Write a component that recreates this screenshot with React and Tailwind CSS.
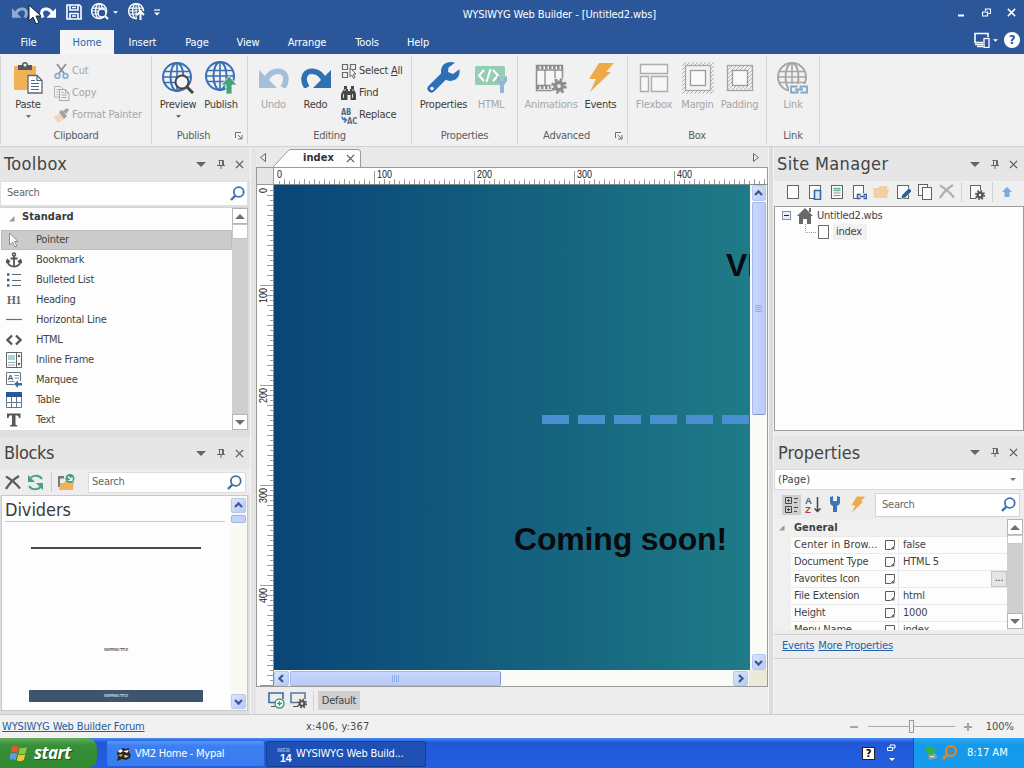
import React from "react";

/* ---------- icons ---------- */

function Svg({ w = 16, h = 16, vb, className = "", children }) {
  return (
    <svg width={w} height={h} viewBox={vb || `0 0 ${w} ${h}`} fill="none" className={"block shrink-0 " + className}>
      {children}
    </svg>
  );
}

function GlobeLines({ c, sw = 2 }) {
  return (
    <g stroke={c} strokeWidth={sw}>
      <circle cx="15" cy="15" r="14" />
      <ellipse cx="15" cy="15" rx="6.500" ry="14" />
      <path d="M2.500 9.500h25M2.500 20.500h25M15 1v28M1 15h28" strokeWidth={sw * 0.8} />
    </g>
  );
}

const UndoShape = ({ c, w = 30, h = 20, flip, className }) => (
  <Svg w={w} h={h} vb="0 0 30 20" className={className}>
    <g transform={flip ? "translate(30 0) scale(-1 1)" : undefined}>
      <path d="M0 2v18h18z" fill={c} />
      <path d="M7 12C11 2 23 1 26 7c2 4 1 8-2 12.500" stroke={c} strokeWidth="5.600" />
    </g>
  </Svg>
);

const PasteIcon = () => (
  <Svg w={30} h={32}>
    <rect x="1" y="4" width="22" height="24" rx="1" fill="#efb254" />
    <path d="M5 3h4c0-4 6-4 6 0h4v5H5z" fill="#58585a" />
    <circle cx="12" cy="3" r="1.500" fill="#f1f1f1" />
    <path d="M15 13.500h9l5 5v12.500H15z" fill="#fff" stroke="#5c6670" strokeWidth="1.300" />
    <path d="M24 13.500v5h5M18 18.500h4M18 21.500h8M18 24.500h8M18 27.500h8" stroke="#4c6780" strokeWidth="1.200" />
  </Svg>
);
const CutIcon = () => (
  <Svg>
    <path d="M3 1l7.500 10M12 1L4.500 11" stroke="#8b8c90" strokeWidth="1.700" />
    <circle cx="3.500" cy="13" r="2.300" stroke="#8fabd2" strokeWidth="1.800" />
    <circle cx="11.500" cy="13" r="2.300" stroke="#8fabd2" strokeWidth="1.800" />
  </Svg>
);
const CopyIcon = () => (
  <Svg>
    <path d="M5 12H.5V1.500h6L9 4M2.500 4.500h3M2.500 7h2M2.500 9.500h2" stroke="#b0b3b5" />
    <path d="M5.500 4.500h6l3.500 3.500v7.500H5.500zM11.500 4.500V8H15M7.500 7.500h2M7.500 10h5M7.500 12.500h5" stroke="#a3aaae" />
  </Svg>
);
const PainterIcon = () => (
  <Svg>
    <path d="M0 10l6-4 4 6-6 4z" fill="#f2d5bc" />
    <path d="M5 5l3-2 5 6-3 3zM9 4l4-3 2 2-3 4z" fill="#a4a1a1" />
  </Svg>
);
const PreviewIcon = () => (
  <Svg w={32} h={32}>
    <GlobeLines c="#386fb5" sw={2} />
    <circle cx="20" cy="20" r="6.500" fill="#f4f6f8" stroke="#454545" strokeWidth="2" />
    <path d="M25 25l6 6" stroke="#454545" strokeWidth="3" />
  </Svg>
);
const PublishIcon = () => (
  <Svg w={32} h={33}>
    <GlobeLines c="#386fb5" sw={2} />
    <path d="M24 15l-8 9h5v9h6v-9h5z" fill="#43a47c" stroke="#f1f1f1" strokeWidth="0.800" />
  </Svg>
);
const SelectAllIcon = () => (
  <Svg>
    <path d="M1.500 1.500h5v5h-5zM9.500 1.500h5v5h-5zM1.500 9.500h5v5h-5z" stroke="#6b6b6b" strokeWidth="1.200" />
    <path d="M9 5v9l2-2 1.500 3.500 1.500-1L12.500 11H15z" fill="#f4f4f4" stroke="#6b6b6b" />
  </Svg>
);
const FindIcon = () => (
  <Svg>
    <path d="M3 1h3v3h1V6h2V4h1V1h3v3l2 5v6H9.500v-5h-3v5H0V9l3-5z" fill="#474747" />
    <path d="M2.500 9v4M11.500 9v4M4 4v2M12 4v2" stroke="#d6d6d6" />
  </Svg>
);
const ReplaceIcon = () => (
  <Svg w={17} h={17}>
    <text x="0" y="7.500" fontSize="9" fontWeight="bold" fill="#4c6a88" fontFamily="DejaVu Sans Condensed" textLength="10" lengthAdjust="spacingAndGlyphs">AB</text>
    <text x="6" y="16.500" fontSize="9" fontWeight="bold" fill="#5c6b7a" fontFamily="DejaVu Sans Condensed" textLength="10" lengthAdjust="spacingAndGlyphs">AC</text>
    <path d="M1 9.500c0 3 2 3.500 4 3.500M3 10.500l2.500 2.500L3 15.500" stroke="#3d74ba" strokeWidth="1.400" />
  </Svg>
);
const WrenchBig = () => (
  <Svg w={34} h={32}>
    <path d="M4.500 26.500L17 14" stroke="#2e70b8" strokeWidth="8" strokeLinecap="round" />
    <path d="M28 .8c-8-2.500-14.500 2-14 9.500.5 7 8 10.500 14 7.500 3.800-2 5-6 4.500-10.500L26 12l-5-2 .5-4.500z" fill="#2e70b8" />
    <circle cx="5" cy="26.500" r="1.800" fill="#f1f1f1" />
  </Svg>
);
const HtmlBig = () => (
  <Svg w={32} h={32}>
    <rect x="0" y="4" width="30" height="19" rx="1.500" fill="#93ceb3" />
    <path d="M9 8l-5 5.500L9 19M18 8l5 5.500-5 5.500M15.500 7l-4 13" stroke="#fff" strokeWidth="2" />
    <path d="M27 21v10" stroke="#96b4d4" strokeWidth="4" />
    <path d="M22 14v5c1 4 9 4 10 0v-5l-3 1v4h-4v-4z" fill="#96b4d4" />
  </Svg>
);
const Gear = ({ cx, cy, r, c }) => (
  <g>
    <circle cx={cx} cy={cy} r={r * 0.85} stroke={c} strokeWidth={r * 0.4} strokeDasharray={`${r * 0.3338} ${r * 0.3338}`} />
    <circle cx={cx} cy={cy} r={r * 0.5} stroke={c} strokeWidth={r * 0.5} />
  </g>
);
const FilmIcon = () => (
  <Svg w={32} h={32}>
    <rect x="1.500" y="3.500" width="26" height="25" fill="#f7f7f7" stroke="#8d8d8d" strokeWidth="1.500" />
    <path d="M2 5.500h25M2 25.500h15" stroke="#8d8d8d" strokeWidth="3" strokeDasharray="2.500 1.500" />
    <path d="M1 8h27M1 23.500h16M10 8v15M20 8v8" stroke="#8d8d8d" strokeWidth="1.300" />
    <circle cx="24" cy="24" r="8.500" fill="#f1f1f1" />
    <Gear cx={24} cy={24} r={7.5} c="#8d8d8d" />
  </Svg>
);
const BoltBig = ({ w = 26, h = 31 }) => (
  <Svg w={w} h={h} vb="0 0 26 31">
    <path d="M11 1h15l-8 9h5L2 30l6-13H1z" fill="#eea94a" />
  </Svg>
);
const FlexIcon = () => (
  <Svg w={30} h={30}>
    <path d="M1.500 1.500h27v9h-27zM1.500 13.500h8v15h-8zM12.500 13.500h16v15h-16z" fill="#f7f7f7" stroke="#adadad" strokeWidth="1.400" />
  </Svg>
);
const Hatch = ({ id }) => (
  <pattern id={id} width="4" height="4" patternUnits="userSpaceOnUse">
    <path d="M-1 5L5 -1M-1 1L1 -1M3 5L5 3" stroke="#aaa" strokeWidth="0.900" />
  </pattern>
);
const MarginIcon = () => (
  <Svg w={32} h={32}>
    <defs><Hatch id="hm" /></defs>
    <rect x="0" y="0" width="32" height="32" fill="url(#hm)" />
    <rect x="3.500" y="3.500" width="25" height="25" fill="#f2f2f2" stroke="#aaa" strokeWidth="1.300" />
    <rect x="8.500" y="8.500" width="15" height="15" fill="#f9f9f9" stroke="#9b9b9b" strokeWidth="1.300" />
  </Svg>
);
const PaddingIcon = () => (
  <Svg w={28} h={28}>
    <defs><Hatch id="hp" /></defs>
    <rect x="1.500" y="1.500" width="25" height="25" fill="url(#hp)" stroke="#a5a5a5" strokeWidth="1.300" />
    <rect x="6.500" y="6.500" width="15" height="15" fill="#f9f9f9" stroke="#9b9b9b" strokeWidth="1.300" />
  </Svg>
);
const LinkBig = () => (
  <Svg w={32} h={32}>
    <GlobeLines c="#a6a6a6" sw={2} />
    <path d="M12 22h20v10H12z" fill="#f1f1f1" />
    <path d="M20.500 24.500h-6.500v6h6.500v-2M18 27.500h8M23.500 26.500v-2h6.500v6h-6.500" stroke="#7ea9cd" strokeWidth="1.800" />
  </Svg>
);
const Launcher = () => (
  <Svg w={8} h={8}>
    <path d="M.5 6V.5H6M3 3l4 4M7 3v4H3" stroke="#6e6e6e" />
  </Svg>
);
const Down = ({ w = 5, c = "#555", className = "" }) => (
  <Svg w={w} h={Math.ceil(w / 2)} vb="0 0 10 5" className={className}><path d="M0 0h10L5 5z" fill={c} /></Svg>
);
const Up = ({ w = 10, c = "#6f6f6f" }) => (
  <Svg w={w} h={w / 2} vb="0 0 10 5"><path d="M0 5h10L5 0z" fill={c} /></Svg>
);
const SearchIcon = ({ c = "#3d72b4" }) => (
  <Svg w={15} h={15}>
    <circle cx="8.800" cy="6" r="4.900" stroke={c} strokeWidth="1.800" />
    <path d="M5.500 9.500L1 14" stroke={c} strokeWidth="2.400" />
  </Svg>
);
const CloseX = ({ s = 9, c = "#5a5a5a", sw = 1.4 }) => (
  <Svg w={s} h={s} vb="0 0 10 10"><path d="M1 1l8 8M9 1L1 9" stroke={c} strokeWidth={sw} /></Svg>
);
const DeleteX = ({ c }) => (
  <Svg w={16} h={15}>
    <path d="M1 1.500c5 3 10 7 14 12" stroke={c} strokeWidth="2.200" />
    <path d="M14 1C9 4 4 9 1 14" stroke={c} strokeWidth="2.400" />
  </Svg>
);
const PinIcon = () => (
  <Svg w={8} h={9}><path d="M1.500.5h5M2.500.5v5M5.500.5v5M6.500.5v5M0 5.500h8M4 6v3" stroke="#666" /></Svg>
);

const PageShape = ({ x = 2.5, y = 1.5, w = 11, h = 13 }) => (
  <rect x={x} y={y} width={w} height={h} fill="#fcfcfc" stroke="#5d6266" />
);

/* ---------- ribbon ---------- */

function BigButton({ w, icon, label, off, arrow }) {
  return (
    <div className={"flex flex-col items-center " + w}>
      <div className="flex h-[37px] items-center justify-center">{icon}</div>
      <span className={"mt-px whitespace-nowrap leading-4 " + (off ? "text-[#a6a6a6]" : "text-[#3d3d3d]")}>{label}</span>
      {arrow && <Down className="mt-[2px]" />}
    </div>
  );
}
function SmallButton({ icon, children, off }) {
  return (
    <div className={"flex h-[22px] items-center whitespace-nowrap pt-[2px] " + (off ? "text-[#a6a6a6]" : "text-[#3d3d3d]")}>
      <span className="w-[18px]">{icon}</span>
      {children}
    </div>
  );
}
function Group({ w, label, launcher, children }) {
  return (
    <div className={"flex shrink-0 flex-col pt-[5px] " + w}>
      <div className="flex h-[69px]">{children}</div>
      <div className="flex h-4 items-center text-[#5c5c5c]">
        <span className="flex-1 text-center">{label}</span>
        {launcher && <span className="mr-1 w-[8px]"><Launcher /></span>}
      </div>
    </div>
  );
}
const Sep = () => <div className="mt-0.5 h-[88px] w-px shrink-0 bg-[#d5d5d5]" />;

function Ribbon() {
  return (
    <div className="flex h-[93px] shrink-0 border-b border-[#d0d0d0] bg-[#f1f1f1]">
      <Sep />
      <Group w="w-[150px]" label="Clipboard">
        <BigButton w="ml-[7px] w-10" icon={<PasteIcon />} label="Paste" arrow />
        <div className="ml-[6px] tracking-[-0.2px]">
          <SmallButton off icon={<CutIcon />}>Cut</SmallButton>
          <SmallButton off icon={<CopyIcon />}>Copy</SmallButton>
          <SmallButton off icon={<PainterIcon />}>Format Painter</SmallButton>
        </div>
      </Group>
      <Sep />
      <Group w="w-[95px]" label="Publish" launcher>
        <BigButton w="ml-1 w-11" icon={<PreviewIcon />} label="Preview" arrow />
        <BigButton w="w-[42px]" icon={<PublishIcon />} label="Publish" />
      </Group>
      <Sep />
      <Group w="w-[163px]" label="Editing">
        <BigButton w="ml-[5px] w-[41px]" icon={<UndoShape c="#a3bfda" />} label="Undo" off />
        <BigButton w="w-[43px]" icon={<UndoShape c="#2e70b3" flip />} label="Redo" />
        <div className="ml-1">
          <SmallButton icon={<SelectAllIcon />}>Select&nbsp;<u>A</u>ll</SmallButton>
          <SmallButton icon={<FindIcon />}>Find</SmallButton>
          <SmallButton icon={<ReplaceIcon />}>Replace</SmallButton>
        </div>
      </Group>
      <Sep />
      <Group w="w-[105px]" label="Properties">
        <BigButton w="ml-[5px] w-[53px]" icon={<WrenchBig />} label="Properties" />
        <BigButton w="w-[42px]" icon={<HtmlBig />} label="HTML" off />
      </Group>
      <Sep />
      <Group w="w-[109px]" label="Advanced" launcher>
        <BigButton w="ml-[5px] w-14" icon={<FilmIcon />} label="Animations" off />
        <BigButton w="w-[43px]" icon={<BoltBig />} label="Events" />
      </Group>
      <Sep />
      <Group w="w-[138px]" label="Box">
        <BigButton w="ml-1 w-11" icon={<FlexIcon />} label="Flexbox" off />
        <BigButton w="w-[43px]" icon={<MarginIcon />} label="Margin" off />
        <BigButton w="w-[41px]" icon={<PaddingIcon />} label="Padding" off />
      </Group>
      <Sep />
      <Group w="w-[52px]" label="Link">
        <BigButton w="ml-[5px] w-[42px]" icon={<LinkBig />} label="Link" off />
      </Group>
      <Sep />
    </div>
  );
}

/* ---------- title bar ---------- */

function TitleBar() {
  return (
    <div className="flex h-[30px] items-center pl-3 text-white">
      <div className="relative flex w-[48px] shrink-0 items-center gap-3 pb-1.5">
        <UndoShape c="#8fa9d0" w={16} h={11} />
        <UndoShape c="#fff" w={16} h={11} flip />
        <Svg w={13} h={21} className="absolute left-[16px] top-[-3px]">
          <path d="M1 1v16l4-4 3 7 3-1.500-3-6.500h5z" fill="#fff" stroke="#111" strokeWidth="0.900" />
        </Svg>
      </div>
      <div className="ml-[6px] flex items-center pb-1.5">
        <Svg w={16} h={16}>
          <path d="M1 1h12.500l1.500 1.500V15H1zM4 1v5h8V1M4 15V9.500h8V15M6 12h4M6 3.500h4" stroke="#fff" strokeWidth="1.600" />
        </Svg>
        <Svg w={18} h={18} className="ml-[9px]">
          <g transform="scale(.54)"><GlobeLines c="#fff" sw={2.4} /></g>
          <circle cx="11" cy="10" r="4" fill="#2b579a" stroke="#fff" strokeWidth="1.500" />
          <path d="M14 13l3 3" stroke="#fff" strokeWidth="2" />
        </Svg>
        <Down c="#fff" className="ml-1" />
        <Svg w={17} h={18} className="ml-[10px]">
          <g transform="scale(.54)"><GlobeLines c="#fff" sw={2.4} /></g>
          <path d="M9 8h8v9H9z" fill="#2b579a" />
          <path d="M12.500 17V9M9 12l3.500-3.500L16 12" stroke="#fff" strokeWidth="2" />
        </Svg>
        <Svg w={6} h={7} className="ml-[9px]"><path d="M0 1h6" stroke="#fff" strokeWidth="1.200" /><path d="M0 3.500h6L3 6.500z" fill="#fff" /></Svg>
      </div>
      <div className="flex flex-1 justify-end pr-[301px]"><span className="whitespace-nowrap tracking-[-0.1px]">WYSIWYG Web Builder - [Untitled2.wbs]</span></div>
      <div className="flex items-center pb-1.5 pr-[8px]">
        <Svg w={8} h={9}><path d="M1 7.500h6" stroke="#fff" strokeWidth="2" /></Svg>
        <Svg w={9} h={9} className="ml-[17px]"><path d="M3.500 3V1h5v4.500h-2M3 1h6M.5 4h5v4h-5zM0 4h6" stroke="#fff" strokeWidth="1.200" /></Svg>
        <span className="ml-[16px]"><CloseX s={9} c="#fff" sw={1.7} /></span>
      </div>
    </div>
  );
}

const MENU = [
  ["File", "w-[57px]"], ["Home", ""], ["Insert", "w-[57px]"], ["Page", "w-[52px]"], ["View", "w-[50px]"],
  ["Arrange", "w-[68px]"], ["Tools", "w-[52px]"], ["Help", "w-[50px]"],
];
function MenuBar() {
  return (
    <div className="flex h-6 text-white">
      {MENU.map(([m, w]) =>
        m === "Home" ? (
          <div key={m} className="ml-[3px] w-[54px] bg-[#f5f5f5] text-center leading-[25px] tracking-[-0.1px] text-[#2b66ac]">Home</div>
        ) : (
          <div key={m} className={"text-center leading-[25px] tracking-[-0.1px] " + w}>{m}</div>
        )
      )}
      <div className="flex flex-1 items-center justify-end pb-1 pr-1">
        <Svg w={16} h={16}>
          <path d="M9 10.500H1v-9h13V5M3 14.500h6M1 12.500h8" stroke="#fff" strokeWidth="1.600" />
          <rect x="10" y="6.500" width="5" height="9" stroke="#fff" strokeWidth="1.300" />
        </Svg>
        <Down c="#fff" className="ml-[3px]" />
        <div className="ml-[6px] flex h-4 w-4 items-center justify-center rounded-full bg-white text-[13px] font-bold text-[#2b579a]">?</div>
      </div>
    </div>
  );
}

/* ---------- panels ---------- */

function PanelHeader({ title, h = "h-[34px]", t = "tracking-normal" }) {
  return (
    <div className={"flex shrink-0 items-center bg-[#e6e6e6] pl-[3px] pr-[6px] " + h}>
      <span className={"flex-1 text-[18px] leading-6 text-[#444] " + t}>{title}</span>
      <Down w={10} c="#666" />
      <span className="ml-[11px]"><PinIcon /></span>
      <span className="ml-[10px]"><CloseX /></span>
    </div>
  );
}

const FlatBtn = ({ up }) => (
  <div className="flex h-4 w-4 shrink-0 items-center justify-center border border-[#b5b5b5] bg-white">
    {up ? <Up /> : <Down w={10} c="#6f6f6f" />}
  </div>
);

const TOOLS = [
  ["Pointer", <Svg><path d="M3.500 1v12l3-3 2.500 5 2-1-2.500-4.500H12z" fill="#fff" stroke="#8c8c8c" /></Svg>],
  ["Bookmark", <Svg><circle cx="8" cy="2.500" r="1.500" stroke="#555" strokeWidth="1.500" /><path d="M8 4v11M4.500 6.500h7M1.500 9c.5 4 3 5.500 6.500 5.500s6-1.500 6.500-5.500M0 11l1.500-3L4 10M12 10l2.500-2L16 11" stroke="#555" strokeWidth="1.800" /></Svg>],
  ["Bulleted List", <Svg><path d="M1 2.500h2.500M1 8h2.500M1 13.500h2.500" stroke="#44627a" strokeWidth="2.500" /><path d="M6 2.500h9M6 8.500h9M6 13.500h9" stroke="#596b78" /></Svg>],
  ["Heading", <Svg><text x="1" y="12" fontSize="12" fontWeight="bold" fill="#666" fontFamily="Liberation Serif" textLength="14" lengthAdjust="spacingAndGlyphs">H1</text></Svg>],
  ["Horizontal Line", <Svg><path d="M0 7.500h16" stroke="#46799b" strokeWidth="1.200" /></Svg>],
  ["HTML", <Svg><path d="M6 3.500L1.500 8 6 12.500M10 3.500L14.500 8 10 12.500" stroke="#555" strokeWidth="2.300" /></Svg>],
  ["Inline Frame", <Svg><path d="M.5.5h15v15H.5zM10.500.5v15" stroke="#5c666c" /><path d="M2 3h7v5H2z" fill="#a9d3dc" /><path d="M2 10.500h7M2 13h7" stroke="#9aa8af" /><path d="M11.500 5L13 2l1.500 3zM11.500 11l1.500 3 1.500-3z" fill="#555" /></Svg>],
  ["Marquee", <Svg><path d="M8 12.500H.5V.5h14V9" stroke="#6b7883" /><text x="1.500" y="7.500" fontSize="8" fontWeight="bold" fill="#4a6377" fontFamily="Liberation Sans">A</text><path d="M8.500 3.500H13M8.500 6H13M2.500 9.500h6" stroke="#7d97ab" /><path d="M8 12l4-3.500V11h4v2.500h-4V16z" fill="#3b69ab" /></Svg>],
  ["Table", <Svg><path d="M0 0h16v5H0z" fill="#2b579a" /><path d="M.5 5v10.500h15V5M.5 10.500h15M5.500 5v11M10.500 5v11" stroke="#65788b" /></Svg>],
  ["Text", <Svg><path d="M1 1.500h13.500V6H13c-.3-2-1-2.700-3.500-2.700v8.500c0 1.200.5 1.500 2 1.500v1.200H4v-1.200c1.500 0 2-.3 2-1.500V3.300C3.500 3.300 2.800 4 2.500 6H1z" fill="#575757" /></Svg>],
];

function Toolbox() {
  return (
    <div className="flex h-[283px] flex-col">
      <PanelHeader title="Toolbox" t="pl-px tracking-[0.4px]" />
      <div className="mb-px flex h-[25px] w-[248px] items-center border border-[#e0e0e0] bg-white pb-px pl-[6px] pr-[2px] text-[#666]">
        <span className="flex-1">Search</span>
        <SearchIcon />
      </div>
      <div className="flex h-[223px] w-[248px] border-t border-[#d2d2d2] bg-[#fdfdfd]">
        <div className="flex-1 pl-px">
          <div className="flex h-[22px] items-center pb-[5px] text-[#3a3a3a]">
            <Svg w={6} h={6} className="ml-2 mt-1 mr-[7px]"><path d="M5.500 0v5.500H0z" fill="#9a9a9a" /></Svg>
            <b className="tracking-[0.05px]">Standard</b>
          </div>
          {TOOLS.map(([name, icon], i) => (
            <div key={name} className={"flex h-5 items-center pl-[5px] text-[#444] " + (i === 0 ? "bg-[#cbcbcb] outline outline-1 -outline-offset-1 outline-[#bdbdbd]" : "")}>
              <span className="w-[30px]">{icon}</span>
              <span className="pb-px">{name}</span>
            </div>
          ))}
        </div>
        <div className="flex w-4 flex-col bg-[#cfcfcf]">
          <FlatBtn up />
          <div className="h-[15px] border border-[#c4c4c4] bg-white" />
          <div className="flex-1" />
          <FlatBtn />
        </div>
      </div>
    </div>
  );
}

function XpBtn({ dir, w = "w-[15px]", h = "h-[15px]" }) {
  const d = { up: "M1 6l3.500-3.500L8 6", down: "M1 3l3.500 3.500L8 3", left: "M6 1L2.500 4.500 6 8", right: "M3 1l3.500 3.500L3 8" }[dir];
  return (
    <div className={"flex shrink-0 items-center justify-center rounded-[2px] border border-[#b4c8f4] bg-linear-to-br from-[#dbe5fd] to-[#b5cbf8] " + w + " " + h}>
      <Svg w={9} h={9}><path d={d} stroke="#43588e" strokeWidth="2.300" /></Svg>
    </div>
  );
}

function Blocks() {
  return (
    <div className="mt-[7px] flex h-[278px] flex-col">
      <PanelHeader title="Blocks" h="h-[32px]" t="pl-px tracking-[-0.35px]" />
      <div className="flex h-[26px] items-center bg-[#ededed] pl-[5px]">
        <DeleteX c="#5e5e5e" />
        <Svg w={17} h={17} className="ml-[6px]">
          <path d="M2 7c1-6 10-7 13-2M15 10c-1 6-10 7-13 2" stroke="#49a181" strokeWidth="2" />
          <path d="M1 1v7h7zM16 16V9H9z" fill="#49a181" />
        </Svg>
        <div className="ml-[7px] h-5 w-px bg-[#ccc]" />
        <Svg w={17} h={17} className="ml-[6px]">
          <path d="M0 2h6v2.500H2V13H0z" fill="#777" />
          <path d="M2 9h4l1-2h9l-1 9H1z" fill="#ecb35c" />
          <circle cx="12" cy="4.500" r="4.500" fill="#43a17b" />
          <path d="M10 2.500l4 4M14 3v3.500h-3.500" stroke="#fff" strokeWidth="1.200" />
        </Svg>
        <div className="ml-[13px] flex h-[21px] w-[158px] items-center border border-[#dcdcdc] bg-white pl-[3px] pr-[3px] text-[#666]">
          <span className="flex-1">Search</span>
          <SearchIcon c="#426f9b" />
        </div>
      </div>
      <div className="ml-px flex h-[216px] w-[247px] border border-[#c8c8c8] bg-[#fdfdfd]">
        <div className="flex-1 px-[3px]">
          <div className="h-[26px] w-[220px] border-b border-[#c9c9c9] text-[18px] leading-[28px] tracking-[-0.05px] text-[#3c3c3c]">Dividers</div>
          <div className="ml-[26px] mt-[25px] h-[2px] w-[170px] bg-[#454a52]" />
          <div className="mt-[97px] text-center text-[4px] leading-[8px] tracking-[-0.35px] text-[#222]">INSPIRING TITLE</div>
          <div className="ml-6 mt-[36px] h-3 w-[174px] bg-[#3c556d] text-center text-[4px] leading-[12px] tracking-[-0.35px] text-[#e6edf2]">INSPIRING TITLE</div>
        </div>
        <div className="flex w-[17px] flex-col items-center bg-[#f9f9f2] pt-[2px] pb-px">
          <XpBtn dir="up" />
          <div className="mt-0.5 h-2 w-[15px] rounded-[2px] border border-[#9fb5e8] bg-[#c4d3fb]" />
          <div className="flex-1" />
          <XpBtn dir="down" />
        </div>
      </div>
    </div>
  );
}

/* ---------- editor ---------- */

const TICKS = Array.from({ length: 99 }, (_, i) => i * 5);
const MARKS = [0, 100, 200, 300, 400];

function RulerLabel({ v, transform }) {
  return (
    <text transform={transform} fontSize="10.500" fill="#222" fontFamily="Liberation Sans" letterSpacing="0" textLength={v ? 15 : 5} lengthAdjust="spacingAndGlyphs">{v}</text>
  );
}
function HRuler() {
  return (
    <svg width="494" height="17" className="block bg-white">
      {TICKS.map((v) => (
        <path key={v} d={`M${v + 0.5} ${v % 100 === 0 ? (v ? 3 : 17) : v % 10 === 0 ? 11 : 13}V17`} stroke="#9a9a9a" />
      ))}
      {MARKS.map((v) => <RulerLabel key={v} v={v} transform={`translate(${v + 3} 10)`} />)}
      <path d="M0 16.500h494" stroke="#808a8a" />
    </svg>
  );
}
function VRuler() {
  return (
    <svg width="17" height="502" className="block shrink-0 bg-white">
      {TICKS.concat([495, 500]).map((v) => (
        <path key={v} d={`M${v % 100 === 0 ? (v ? 3 : 17) : v % 10 === 0 ? 10 : 13} ${v + 0.5}H17`} stroke="#9a9a9a" />
      ))}
      {MARKS.map((v) => <RulerLabel key={v} v={v} transform={`translate(10 ${v ? v + 18 : 8}) rotate(-90)`} />)}
      <path d="M16.500 0v502" stroke="#8a9494" />
    </svg>
  );
}

function Canvas() {
  return (
    <div className="relative h-[485px] w-[476px] shrink-0 overflow-hidden bg-linear-to-r from-[#0a4578] via-[#145f7d] to-[#1f7b87]">
      <div className="absolute left-[452px] top-[64px] whitespace-nowrap font-[Liberation_Sans,sans-serif] text-[32px] font-bold leading-8 tracking-normal text-[#0a0a12]">VM2</div>
      <div className="absolute left-[268px] top-[230px] flex gap-[9px]">
        {[0, 1, 2, 3, 4, 5].map((i) => <div key={i} className="h-[9px] w-[27px] shrink-0 bg-[#4a8fd0]" />)}
      </div>
      <div className="absolute left-[240px] top-[338px] whitespace-nowrap font-[Liberation_Sans,sans-serif] text-[32px] font-bold leading-8 tracking-[-0.18px] text-[#0a0a0e]">Coming soon!</div>
    </div>
  );
}

function Editor() {
  return (
    <div className="flex w-[512px] shrink-0 flex-col">
      <div className="flex h-[20px] items-end bg-[#e9e9e9]">
        <Svg w={6} h={9} className="mb-[5px] ml-1"><path d="M5.500.5v8L.5 4.500z" stroke="#666" /></Svg>
        <div className="relative ml-[7px] flex h-[18px] w-[88px] items-center pl-[30px]">
          <Svg w={88} h={18} className="absolute left-0 top-0"><path d="M0 18L14.500 2.500Q16 .5 18 .5H85q2.500 0 2.500 2.500v15" fill="#fdfdfd" stroke="#9a9a9a" /></Svg>
          <b className="relative w-[43px] tracking-[0.05px] text-[#333]">index</b>
          <span className="relative"><CloseX /></span>
        </div>
        <div className="flex flex-1 justify-end pb-[5px] pr-[9px]">
          <Svg w={6} h={9}><path d="M.5.5v8l5-4z" stroke="#666" /></Svg>
        </div>
      </div>
      <div className="h-[520px] border border-[#9a9a9a]">
        <div className="flex h-[17px]">
          <div className="w-[17px] border-b border-r border-[#9a9a9a] bg-[#e6e6e6]" />
          <HRuler />
        </div>
        <div className="flex h-[501px] overflow-hidden">
          <VRuler />
          <div>
            <div className="flex h-[485px]">
              <Canvas />
              <div className="flex w-[17px] flex-col items-center bg-[#fafaf6]">
                <XpBtn dir="up" w="w-[14px]" h="h-4" />
                <div className="mt-px flex h-[213px] w-[14px] items-center justify-center rounded-[2px] border border-[#a3b8ea] border-b-[#7d96c8] bg-linear-to-r from-[#c9d7ff] to-[#b9cbf8]">
                  <Svg w={7} h={8}><path d="M0 .5h7M0 2.500h7M0 4.500h7M0 6.500h7" stroke="#8faeef" /></Svg>
                </div>
                <div className="flex-1" />
                <XpBtn dir="down" w="w-[14px]" h="h-4" />
              </div>
            </div>
            <div className="flex h-4 w-[493px] items-center bg-[#fafaf6]">
              <XpBtn dir="left" />
              <div className="ml-px flex h-[15px] w-[211px] items-center justify-center rounded-[2px] border border-[#a3b8ea] border-r-[#7d96c8] bg-linear-to-b from-[#c9d7ff] to-[#b9cbf8]">
                <Svg w={8} h={7}><path d="M.5 0v7M2.500 0v7M4.500 0v7M6.500 0v7" stroke="#8faeef" /></Svg>
              </div>
              <div className="flex-1" />
              <XpBtn dir="right" />
              <div className="ml-px h-4 w-[18px] bg-[#ece9d8]" />
            </div>
          </div>
        </div>
      </div>
      <div className="flex h-[27px] items-center pl-3">
        <Svg w={17} h={17}>
          <path d="M7 10.500H1V1h14v6" stroke="#3f6a9f" strokeWidth="1.600" /><path d="M3 14.500h5" stroke="#555" />
          <circle cx="11.500" cy="11.500" r="4.500" fill="#fff" stroke="#3c9b74" strokeWidth="1.500" /><path d="M9 11.500h5M11.500 9v5" stroke="#3c9b74" strokeWidth="1.400" />
        </Svg>
        <Svg w={17} h={17} className="ml-[5px]">
          <path d="M7 10.500H1V1h14v6" stroke="#5c7898" strokeWidth="1.600" /><path d="M3 14.500h5" stroke="#555" />
          <Gear cx={12} cy={11.5} r={4.8} c="#555" />
        </Svg>
        <div className="ml-[6px] h-5 w-px bg-[#d2d2d2]" />
        <div className="ml-1 flex h-[19px] w-[42px] items-center justify-center bg-[#d0d0d0] text-[#444]">Default</div>
      </div>
    </div>
  );
}

/* ---------- right side ---------- */

function SiteManager() {
  return (
    <div className="flex h-[284px] flex-col">
      <PanelHeader title="Site Manager" t="tracking-[0.35px]" />
      <div className="flex h-[25px] items-center bg-[#efefef] pb-[3px] pl-[11px]">
        <div className="flex gap-[6px]">
          <Svg><PageShape /></Svg>
          <Svg><PageShape /><path d="M7.500 6.500h6v9h-6z" fill="#d6e8f6" stroke="#2f6ba8" strokeWidth="1.600" /></Svg>
          <Svg><PageShape /><path d="M4.500 4.500h7M4.500 6.500h7" stroke="#65b3a5" strokeWidth="1.300" /><path d="M4.500 9h7M4.500 11.500h7" stroke="#8a9298" /></Svg>
          <Svg><PageShape w={10} /><path d="M6 9h10v7H6z" fill="#efefef" /><path d="M9.500 10.500H6.500v4h3M9 12.500h5M12.500 10.500h3v4h-3" stroke="#2f5f9e" strokeWidth="1.500" /></Svg>
          <Svg><path d="M0 4h5l2-2h7v3h2l-2 9H1z" fill="#f0cfa4" /></Svg>
          <Svg><PageShape /><path d="M6 15l1-4 7-7 3 3-7 7z" fill="#2f5f9e" stroke="#efefef" strokeWidth="0.600" /></Svg>
          <Svg><PageShape x={1.5} y={0.5} w={9} h={11} /><PageShape x={5.5} y={3.5} w={9} h={12} /></Svg>
          <DeleteX c="#b0b0b0" />
        </div>
        <div className="ml-[6px] h-5 w-px bg-[#d2d2d2]" />
        <Svg className="ml-[7px]"><PageShape x={1.5} w={10} /><circle cx="11" cy="11" r="5" fill="#efefef" /><Gear cx={11} cy={11} r={4.8} c="#555" /></Svg>
        <div className="ml-[7px] h-5 w-px bg-[#d2d2d2]" />
        <Svg w={10} h={11} className="ml-[9px]"><path d="M5 0l5 5H7.500v5h-5V5H0z" fill="#79abe0" /></Svg>
      </div>
      <div className="h-[225px] border border-[#9b9b9b] bg-[#fdfdfd] pl-[7px] text-[#444]">
        <div className="flex h-[17px] items-center">
          <Svg w={9} h={9}><rect x=".5" y=".5" width="8" height="8" fill="#e8eef4" stroke="#8295ad" /><path d="M2 4.500h5" stroke="#222" /></Svg>
          <Svg w={16} h={16} className="ml-[6px]"><path d="M8 0l8 8h-2v8h-4v-5H6v5H2V8H0zM12 0h2v4h-2z" fill="#696969" /></Svg>
          <span className="ml-1 tracking-[-0.2px]">Untitled2.wbs</span>
        </div>
        <div className="flex h-4 items-center">
          <Svg w={12} h={16} className="ml-[23px]"><path d="M.5 0v8.500H12" stroke="#999" strokeDasharray="1 1" /></Svg>
          <Svg w={11} h={14} className="ml-px"><rect x=".5" y=".5" width="10" height="13" fill="#fff" stroke="#6b6b6b" /></Svg>
          <span className="ml-1 bg-[#f1f1f1] pl-[3px] pr-[5px]">index</span>
        </div>
      </div>
    </div>
  );
}

const PROPS = [
  ["Center in Brow...", "false"], ["Document Type", "HTML 5"], ["Favorites Icon", ""],
  ["File Extension", "html"], ["Height", "1000"], ["Menu Name", "index"],
];

function Properties() {
  return (
    <div className="mt-[5px] flex flex-col">
      <PanelHeader title="Properties" h="h-[33px]" t="pl-px tracking-[0.05px]" />
      <div className="flex h-[21px] items-center border border-[#dadada] bg-[#fdfdfd] pl-[3px] pr-[7px] text-[#444]">
        <span className="flex-1 tracking-[0.1px]">(Page)</span>
        <Down w={6} c="#777" />
      </div>
      <div className="flex h-[29px] items-center pl-2">
        <div className="flex h-5 w-[19px] items-center justify-center bg-[#cfcfcf]">
          <Svg w={16} h={18}>
            <path d="M1.500 1.500h6v6h-6zM1.500 10.500h6v6h-6zM3 4.500h3M4.500 3v3M3 13.500h3M4.500 12v3M10 2.500h4M10 6.500h3M10 11.500h4M10 15.500h3" stroke="#444" />
          </Svg>
        </div>
        <Svg w={16} h={18} className="ml-1">
          <text x="0" y="8" fontSize="9.500" fontWeight="bold" fill="#2f6793" fontFamily="Liberation Sans">A</text>
          <text x="0" y="17" fontSize="9.500" fontWeight="bold" fill="#b93b36" fontFamily="Liberation Sans">Z</text>
          <path d="M12.500 1v15M9.500 12.500l3 3 3-3" stroke="#444" strokeWidth="1.500" />
        </Svg>
        <Svg w={12} h={17} className="ml-[8px]"><path d="M1 1v5c0 2 1 3 3 4v6h4v-6c2-1 3-2 3-4V1L8 0v5H4V0z" fill="#3b75b8" /></Svg>
        <span className="ml-[9px]"><BoltBig w={16} h={17} /></span>
        <div className="ml-[9px] mr-1 flex h-6 flex-1 items-center border border-[#d4d4d4] bg-white pl-[6px] pr-[3px] text-[#666]">
          <span className="flex-1">Search</span>
          <SearchIcon />
        </div>
      </div>
      <div className="flex h-[111px] overflow-hidden text-[#3f3f3f]">
        <div className="flex w-[233px] flex-col bg-[#f0f0f0]">
          <div className="flex h-[17px] shrink-0 items-center">
            <Svg w={6} h={6} className="ml-[5px] mr-[9px]"><path d="M5.500 0v5.500H0z" fill="#9a9a9a" /></Svg>
            <b className="tracking-normal">General</b>
          </div>
          {PROPS.map(([k, v]) => (
            <div key={k} className="ml-[17px] flex h-[17px] shrink-0 items-center border-t border-[#e9e9e9] bg-[#fdfdfd] pl-[3px]">
              <span className={"w-[91px] whitespace-nowrap " + (k === "Center in Brow..." ? "tracking-[0.1px]" : "tracking-[-0.2px]")}>{k}</span>
              <Svg w={10} h={10}><path d="M.5.5h9v5l-4 4h-5z" stroke="#5a5a5a" /><path d="M9.500 5.500v4h-4z" fill="#777" /></Svg>
              <div className="ml-[3px] h-full w-px bg-[#e9e9e9]" />
              <span className="ml-1 flex-1 tracking-[-0.2px]">{v}</span>
              {k === "Favorites Icon" && <span className="h-4 w-4 border border-[#c6c6c6] bg-[#e4e4e4] text-center leading-3">...</span>}
            </div>
          ))}
        </div>
        <div className="flex h-[110px] w-4 flex-col bg-[#cfcfcf]">
          <FlatBtn up />
          <div className="h-[9px] border border-[#c8c8c8] bg-white" />
          <div className="flex-1" />
          <FlatBtn />
        </div>
      </div>
      <div className="mt-[4px] flex h-[25px] gap-1 border-y border-[#cfcfcf] pl-2 leading-[22px] tracking-[-0.2px] text-[#1f62ae] underline">
        <span>Events</span><span>More Properties</span>
      </div>
    </div>
  );
}

/* ---------- bottom ---------- */

function StatusBar() {
  return (
    <div className="flex h-6 shrink-0 items-center border-t border-[#cdcdcd] bg-[#f1f1f1] text-[#4c4c4c]">
      <span className="w-[306px] pl-0.5 tracking-[-0.13px] text-[#2560a0] underline">WYSIWYG Web Builder Forum</span>
      <span className="flex-1 tracking-[0.15px]">x:406, y:367</span>
      <span className="h-[2px] w-2 bg-[#a5a5a5]" />
      <div className="ml-[10px] flex w-[87px] items-center">
        <span className="h-px w-[41px] bg-[#aaa]" />
        <span className="h-[13px] w-[5px] border border-[#999] bg-[#eee]" />
        <span className="h-px flex-1 bg-[#aaa]" />
      </div>
      <Svg w={8} h={8} className="ml-[9px]"><path d="M0 4h8M4 0v8" stroke="#a5a5a5" strokeWidth="2" /></Svg>
      <span className="ml-[14px] mr-[10px] tracking-normal">100%</span>
    </div>
  );
}

function Taskbar() {
  return (
    <div className="flex h-[30px] shrink-0 bg-linear-to-b from-[#4a8df0] from-0% via-[#2157d6] via-15% to-[#2360e0] text-white">
      <div className="flex w-[97px] items-center rounded-r-[10px] bg-linear-to-b from-[#62ab5c] via-[#378f37] via-25% to-[#2f8a30] pl-[10px]">
        <Svg w={18} h={17}>
          <path d="M2 2c3-2 4-1 7 0L7.500 8C5 7 3 6.500.5 8z" fill="#e8562c" />
          <path d="M10 2.500c3 1 4 1 7-.5l-1.500 6c-3 1.500-4.500 1.500-7 .500z" fill="#8cc84b" />
          <path d="M.3 9c3-1.500 4-1 7 0L5.500 15c-3-1-4-1-6 0z" fill="#5c9cf0" />
          <path d="M8.300 9.500c3 1 4 1 7-.5l-1.500 6c-3 1.500-4.500 1.500-7 .500z" fill="#f5c52e" />
        </Svg>
        <span className="ml-[6px] font-[Noto_Sans,sans-serif] text-[17px] font-bold italic leading-6 tracking-[-0.5px] font-stretch-normal [text-shadow:1px_1px_1px_#1c4d1c]">start</span>
      </div>
      <div className="ml-[10px] mt-[3px] flex h-[25px] w-[157px] items-center rounded-[2px] bg-linear-to-b from-[#5598fb] via-[#3b7ff1] via-20% to-[#3a7cef] pl-[9px]">
        <Svg>
          <path d="M1 7c2-4 6-6 9-4l3-1v4c2 2 2 4 1 6l-4 2-4-1-5 2 1-4z" fill="#2a2622" />
          <path d="M2 5l3-2 2 2-3 2zM7 5l6-1-2 3z" fill="#fff" /><path d="M2 9l5-1-2 3z" fill="#d9a850" /><path d="M8 9l5 1-4 2z" fill="#e8ddc8" />
        </Svg>
        <span className="ml-[3px]">VM2 Home - Mypal</span>
      </div>
      <div className="ml-[2px] mt-[3px] flex h-[26px] w-[160px] items-center rounded-[2px] border border-[#173e94] bg-[#1e50b5] pl-[10px]">
        <Svg w={16} h={17}>
          <text x="0" y="5.500" fontSize="6" fontWeight="bold" fill="#9ab0d8" fontFamily="Liberation Sans" letterSpacing="0" textLength="13" lengthAdjust="spacingAndGlyphs">WEB</text>
          <text x="3" y="16" fontSize="10.500" fontWeight="bold" fill="#fff" fontFamily="Liberation Sans" letterSpacing="0">14</text>
        </Svg>
        <span className="ml-[3px] tracking-[-0.15px]">WYSIWYG Web Build...</span>
      </div>
      <div className="flex flex-1 items-center justify-end pr-[17px]">
        <div className="flex h-[13px] w-[13px] items-center justify-center border border-[#222] bg-[#fffff0] text-[11px] font-bold leading-none text-black">?</div>
        <Svg w={9} h={18} className="ml-[12px]">
          <path d="M3 3V1h5v3H6M.5 3.500h5v3h-5z" stroke="#fff" /><path d="M2 14h6l-3 3z" fill="#fff" />
        </Svg>
      </div>
      <div className="flex w-[111px] items-center border-l border-[#174fb0] bg-linear-to-b from-[#2fa6f5] via-[#159aea] via-20% to-[#169bee] pl-[10px]">
        <Svg w={15} h={16}>
          <path d="M4 7l8 2 1 4-8 2z" fill="#8fa09c" /><path d="M6 11l4 1" stroke="#fff" />
          <path d="M1 3l5-2 6 5-3 1-1 4-5-3z" fill="#38b13f" />
        </Svg>
        <Svg w={15} h={16} className="ml-[3px]">
          <circle cx="9" cy="6" r="5" stroke="#ec8320" strokeWidth="2" /><circle cx="9" cy="6" r="2" stroke="#b66c26" /><path d="M5.500 9.500L1 14" stroke="#ec8320" strokeWidth="3" />
        </Svg>
        <span className="ml-[10px] whitespace-nowrap tracking-normal">8:17 AM</span>
      </div>
    </div>
  );
}

export default function App() {
  return (
    <div className="flex h-[768px] w-[1024px] flex-col overflow-hidden bg-[#ededed] text-[11px] leading-4 tracking-[-0.25px] font-[DejaVu_Sans_Condensed,DejaVu_Sans,sans-serif] font-stretch-condensed">
      <div className="shrink-0 bg-[#2b579a]">
        <TitleBar />
        <MenuBar />
      </div>
      <Ribbon />
      <div className="flex h-[567px] shrink-0">
        <div className="w-[250px] shrink-0 bg-[#dedede]">
          <Toolbox />
          <Blocks />
        </div>
        <div className="w-[6px] shrink-0 border-l border-[#f5f5f5] bg-[#e4e4e4]" />
        <Editor />
        <div className="w-[6px] shrink-0 border-x border-[#f5f5f5] bg-[#dcdcdc]" />
        <div className="flex-1">
          <SiteManager />
          <Properties />
        </div>
      </div>
      <StatusBar />
      <Taskbar />
    </div>
  );
}
